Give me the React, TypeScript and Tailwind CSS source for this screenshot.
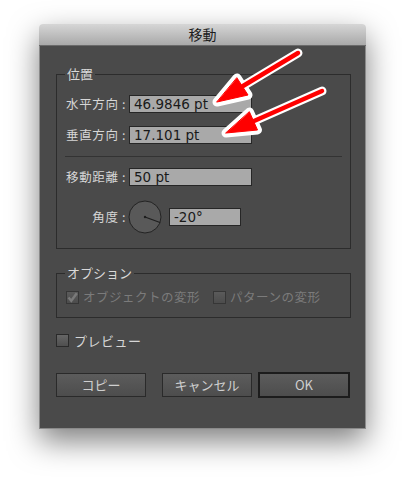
import React from 'react'

const jp = { fontFamily: '"Noto Sans CJK JP", "Noto Sans", sans-serif' }
const num = { fontFamily: '"DejaVu Sans", "Liberation Sans", sans-serif' }

function Field({ value, w = 'w-[123px]' }: { value: string; w?: string }) {
  return (
    <div
      style={num}
      className={`${w} h-[18px] bg-[#a9a9a9] border border-[#262626] text-[13.5px] leading-[16px] text-[#1a1a1a] pl-[4px]`}
    >
      {value}
    </div>
  )
}

function Label({ text }: { text: string }) {
  return (
    <div style={jp} className="w-[66px] text-right text-[12.5px] leading-[18px] text-[#d6d6d6] tracking-[0.6px] pr-[3px] whitespace-pre">
      {text} :
    </div>
  )
}

function Checkbox({ checked, disabled }: { checked?: boolean; disabled?: boolean }) {
  return (
    <div
      className={`w-[13px] h-[13px] border border-[#2a2a2a] bg-gradient-to-b from-[#666] to-[#4f4f4f] flex items-center justify-center ${disabled ? 'opacity-60' : ''}`}
    >
      {checked && (
        <svg width="11" height="11" viewBox="0 0 11 11">
          <path d="M1.5 5.5 L4.3 8.8 L9.8 1.2" fill="none" stroke="#9a9a9a" strokeWidth="2.4" />
        </svg>
      )}
    </div>
  )
}

function Button({ label, primary, w = 'w-[90px]' }: { label: string; primary?: boolean; w?: string }) {
  return (
    <button
      style={jp}
      className={`${w} ${primary ? 'h-[26px] border-2 border-[#1c1c1c]' : 'h-[24px] border border-[#2a2a2a]'} bg-gradient-to-b from-[#5c5c5c] to-[#4d4d4d] text-[13px] text-[#cfcfcf] flex items-center justify-center`}
    >
      {label}
    </button>
  )
}

export default function App() {
  return (
    <div className="relative w-[406px] h-[483px] bg-white overflow-hidden">
      <div className="pt-[24px] pl-[39px]">
        <div className="w-[327px] shadow-[0_12px_30px_rgba(0,0,0,0.5)] rounded-t-[4px]">
          {/* title bar */}
          <div
            style={jp}
            className="h-[22px] rounded-t-[4px] bg-gradient-to-b from-[#d6d6d6] to-[#a9a9a9] border-b border-[#6a6a6a] flex items-center justify-center text-[14px] text-[#1e1e1e]"
          >
            移動
          </div>

          {/* body */}
          <div className="bg-[#4a4a4a] pt-[28px] pb-[30px] border-x border-b border-[#8a8a8a]">
            {/* 位置 */}
            <div className="relative ml-[16px] w-[295px] border border-[#2c2c2c] pt-[20px] pb-[14px]">
              <div style={jp} className="absolute -top-[10px] left-[8px] px-[2px] bg-[#4a4a4a] text-[13px] text-[#d9d9d9] leading-[18px]">
                位置
              </div>
              <div className="flex flex-col gap-[13px] pl-[6px]">
                <div className="flex items-center">
                  <Label text="水平方向" />
                  <Field value="46.9846 pt" />
                </div>
                <div className="flex items-center">
                  <Label text="垂直方向" />
                  <Field value="17.101 pt" />
                </div>
              </div>
              <div className="mx-[8px] mt-[12px] mb-[11px] h-px bg-[#333]" />
              <div className="flex flex-col gap-[14px] pl-[6px]">
                <div className="flex items-center">
                  <Label text="移動距離" />
                  <Field value="50 pt" />
                </div>
                <div className="flex items-center">
                  <Label text="角度" />
                  <svg width="34" height="34" viewBox="0 0 34 34" className="-ml-[1px]">
                    <circle cx="17" cy="17" r="16" fill="#595959" stroke="#232323" strokeWidth="1" />
                    <line x1="17" y1="17" x2="32" y2="22.5" stroke="#1e1e1e" strokeWidth="1.3" />
                    <circle cx="17" cy="17" r="1.2" fill="#1e1e1e" />
                  </svg>
                  <div className="ml-[7px]">
                    <Field value="-20°" w="w-[72px]" />
                  </div>
                </div>
              </div>
            </div>

            {/* オプション */}
            <div className="relative ml-[16px] mt-[24px] w-[295px] border border-[#2c2c2c] pt-[15px] pb-[12px]">
              <div style={jp} className="absolute -top-[10px] left-[8px] px-[2px] bg-[#4a4a4a] text-[13px] text-[#d9d9d9] leading-[18px]">
                オプション
              </div>
              <div style={jp} className="flex items-center pl-[9px] h-[16px] text-[12.5px] text-[#7b7b7b]">
                <Checkbox checked disabled />
                <span className="ml-[4px] tracking-[0.5px]">オブジェクトの変形</span>
                <div className="ml-[13px]">
                  <Checkbox disabled />
                </div>
                <span className="ml-[4px] tracking-[0.5px]">パターンの変形</span>
              </div>
            </div>

            {/* プレビュー */}
            <div style={jp} className="flex items-center ml-[16px] mt-[13px] text-[13px] text-[#d6d6d6]">
              <Checkbox />
              <span className="ml-[5px] tracking-[0.5px]">プレビュー</span>
            </div>

            {/* buttons */}
            <div className="flex items-center ml-[16px] mr-[15px] mt-[21px]">
              <Button label="コピー" />
              <div className="ml-auto flex items-center gap-[6px]">
                <Button label="キャンセル" />
                <Button label="OK" primary w="w-[92px]" />
              </div>
            </div>
          </div>
        </div>
      </div>

      {/* annotation arrows */}
      <svg className="absolute inset-0 pointer-events-none" width="406" height="483" viewBox="0 0 406 483">
        <g stroke="#ffffff" strokeWidth="9" strokeLinejoin="round" strokeLinecap="round" fill="#ffffff">
          <line x1="298" y1="53" x2="243" y2="86" />
          <polygon points="217,102 248,95 237,78" />
          <line x1="322" y1="91" x2="254" y2="121" />
          <polygon points="226,133 257.5,130 249.5,112" />
        </g>
        <g stroke="#ff0000" strokeWidth="4.5" strokeLinejoin="round" strokeLinecap="round" fill="#ff0000">
          <line x1="298" y1="53" x2="243" y2="86" />
          <polygon points="217,102 248,95 237,78" strokeWidth="1" />
          <line x1="322" y1="91" x2="254" y2="121" />
          <polygon points="226,133 257.5,130 249.5,112" strokeWidth="1" />
        </g>
      </svg>
    </div>
  )
}
